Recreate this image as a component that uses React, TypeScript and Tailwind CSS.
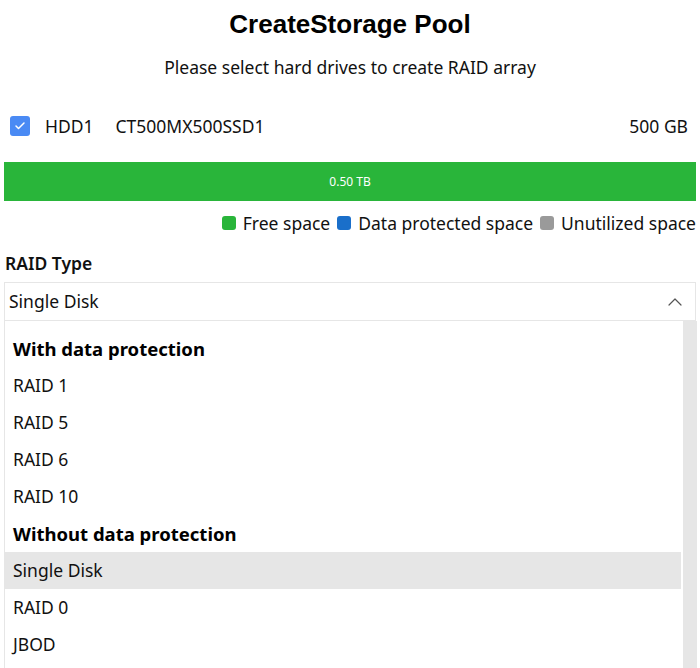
import { Check, ChevronUp } from "lucide-react";

const ui = { fontFamily: '"Noto Sans", "Open Sans", sans-serif' };

const LegendItem = ({ color, label }: { color: string; label: string }) => (
  <span className="flex items-center gap-[7px]">
    <span className={`w-[14px] h-[14px] rounded-[3px] ${color}`} />
    <span>{label}</span>
  </span>
);

const options: { label: string; group?: boolean; active?: boolean }[] = [
  { label: "With data protection", group: true },
  { label: "RAID 1" },
  { label: "RAID 5" },
  { label: "RAID 6" },
  { label: "RAID 10" },
  { label: "Without data protection", group: true },
  { label: "Single Disk", active: true },
  { label: "RAID 0" },
  { label: "JBOD" },
];

export default function App() {
  return (
    <div className="w-[700px] h-[668px] overflow-hidden bg-white text-[#111] text-[17.5px]" style={ui}>
      <h1
        className="pt-[6px] h-[44px] text-center text-[26px] leading-[36px] font-bold text-black"
        style={{ fontFamily: '"Liberation Sans", Arial, sans-serif' }}
      >
        CreateStorage Pool
      </h1>
      <p className="h-[46px] flex items-center justify-center">
        Please select hard drives to create RAID array
      </p>

      <div className="h-[34px] mt-[19px] flex items-center pl-[10px] pr-[12px]">
        <span className="w-[20px] h-[20px] rounded-[3px] bg-[#4a8af4] flex items-center justify-center">
          <Check className="w-[12px] h-[12px] text-white" strokeWidth={3} />
        </span>
        <span className="ml-[15px]">HDD1</span>
        <span className="ml-[22px]">CT500MX500SSD1</span>
        <span className="ml-auto">500 GB</span>
      </div>

      <div className="px-[4px] mt-[19px]">
        <div className="h-[39px] bg-[#29b53a] flex items-center justify-center text-white text-[12px]">
          0.50 TB
        </div>
      </div>

      <div className="h-[44px] flex items-center justify-end gap-[7px] pr-[4px]">
        <LegendItem color="bg-[#29b53a]" label="Free space" />
        <LegendItem color="bg-[#1a6fca]" label="Data protected space" />
        <LegendItem color="bg-[#9a9a9a]" label="Unutilized space" />
      </div>

      <div className="h-[37px] flex items-center pl-[5px] font-semibold">RAID Type</div>

      <div className="mx-[4px] h-[39px] border border-[#e6e6e6] flex items-center pl-[4px] pr-[8px]">
        <span>Single Disk</span>
        <ChevronUp className="ml-auto w-[24px] h-[24px] text-[#555]" strokeWidth={1.2} />
      </div>

      <div className="ml-[4px] mr-[3px] flex border-l border-[#e6e6e6] h-[400px]">
        <div className="flex-1 pt-[9px]">
          {options.map((o) => (
            <div
              key={o.label}
              className={`h-[37px] flex items-center pl-[8px] ${
                o.group ? "font-bold text-black text-[18.5px]" : ""
              } ${o.active ? "bg-[#e6e6e6]" : ""}`}
            >
              {o.label}
            </div>
          ))}
        </div>
        <div className="w-[14px] ml-[2px] bg-[#e6e6e6]" />
      </div>
    </div>
  );
}
